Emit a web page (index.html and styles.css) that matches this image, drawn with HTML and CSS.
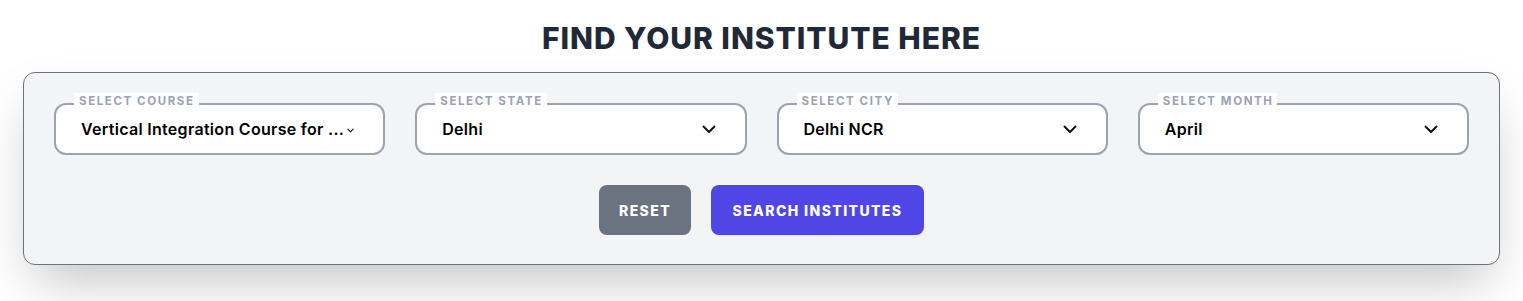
FILE: index.html
```html
<!DOCTYPE html>
<html lang="en">
<head>
<meta charset="utf-8">
<title>Find your institute</title>
<link rel="stylesheet" href="styles.css">
</head>
<body>
<div class="page">
  <h1 class="title">FIND YOUR INSTITUTE HERE</h1>
  <div class="card">
    <div class="fields">
      <div class="field">
        <span class="label">SELECT COURSE</span>
        <div class="box box-compact">
          <span class="value">Vertical Integration Course for ...</span>
          <svg class="chev chev-small" viewBox="0 0 8 5" width="7" height="5"><path d="M1 1l3 3 3-3" fill="none" stroke="#111" stroke-width="1.3" stroke-linecap="round" stroke-linejoin="round"/></svg>
        </div>
      </div>
      <div class="field">
        <span class="label">SELECT STATE</span>
        <div class="box">
          <span class="value">Delhi</span>
          <svg class="chev" viewBox="0 0 14 9" width="14" height="9"><path d="M1.5 1.5l5.5 5.5 5.5-5.5" fill="none" stroke="#111" stroke-width="2" stroke-linecap="round" stroke-linejoin="round"/></svg>
        </div>
      </div>
      <div class="field">
        <span class="label">SELECT CITY</span>
        <div class="box">
          <span class="value">Delhi NCR</span>
          <svg class="chev" viewBox="0 0 14 9" width="14" height="9"><path d="M1.5 1.5l5.5 5.5 5.5-5.5" fill="none" stroke="#111" stroke-width="2" stroke-linecap="round" stroke-linejoin="round"/></svg>
        </div>
      </div>
      <div class="field">
        <span class="label">SELECT MONTH</span>
        <div class="box">
          <span class="value">April</span>
          <svg class="chev" viewBox="0 0 14 9" width="14" height="9"><path d="M1.5 1.5l5.5 5.5 5.5-5.5" fill="none" stroke="#111" stroke-width="2" stroke-linecap="round" stroke-linejoin="round"/></svg>
        </div>
      </div>
    </div>
    <div class="actions">
      <button class="btn btn-reset">RESET</button>
      <button class="btn btn-search">SEARCH INSTITUTES</button>
    </div>
  </div>
</div>
</body>
</html>
```
FILE: styles.css
```css
* { box-sizing: border-box; }
html, body { margin: 0; padding: 0; background: #fff; }
body { font-family: Inter, "Liberation Sans", sans-serif; }
.page { padding: 20px 23px 40px; }
.title {
  margin: 0 0 16px;
  text-align: center;
  font-family: Inter, sans-serif;
  font-weight: 800;
  font-size: 30px;
  line-height: 36px;
  color: #1f2937;
  letter-spacing: 0.95px;
}
.card {
  background: #f3f4f6;
  border: 1px solid #6b7280;
  border-radius: 12px;
  padding: 30px 30px 29px;
  box-shadow: 0 25px 50px -12px rgba(0,0,0,0.25);
}
.fields {
  display: grid;
  grid-template-columns: repeat(4, minmax(0, 1fr));
  column-gap: 30px;
}
.field { position: relative; min-width: 0; }
.label {
  position: absolute;
  left: 20px;
  top: -10px;
  background: #fff;
  padding: 1px 4px 0 5px;
  font-family: Inter, sans-serif;
  font-size: 11.5px;
  line-height: 14px;
  font-weight: 700;
  letter-spacing: 1.6px;
  color: #9ca3af;
}
.box {
  height: 52px;
  background: #fff;
  border: 2px solid #9ca3af;
  border-radius: 12px;
  display: flex;
  align-items: center;
  justify-content: space-between;
  padding: 0 29px 0 25px;
  overflow: hidden;
}
.box-compact { justify-content: flex-start; gap: 3px; padding-right: 10px; }
.value {
  font-family: Inter, sans-serif;
  font-weight: 600;
  font-size: 16px;
  letter-spacing: 0.3px;
  color: #000;
  white-space: nowrap;
}
.chev { display: block; flex: none; }
.chev-small { margin-top: 2px; }
.actions {
  display: flex;
  justify-content: center;
  gap: 20px;
  margin-top: 30px;
}
.btn {
  height: 50px;
  border: none;
  border-radius: 8px;
  color: #fff;
  font-family: Inter, sans-serif;
  font-weight: 800;
  font-size: 14px;
  letter-spacing: 1.4px;
  cursor: pointer;
  padding: 0;
}
.btn-reset { background: #6b7280; width: 92px; }
.btn-search { background: #4f46e5; width: 213px; }
```
